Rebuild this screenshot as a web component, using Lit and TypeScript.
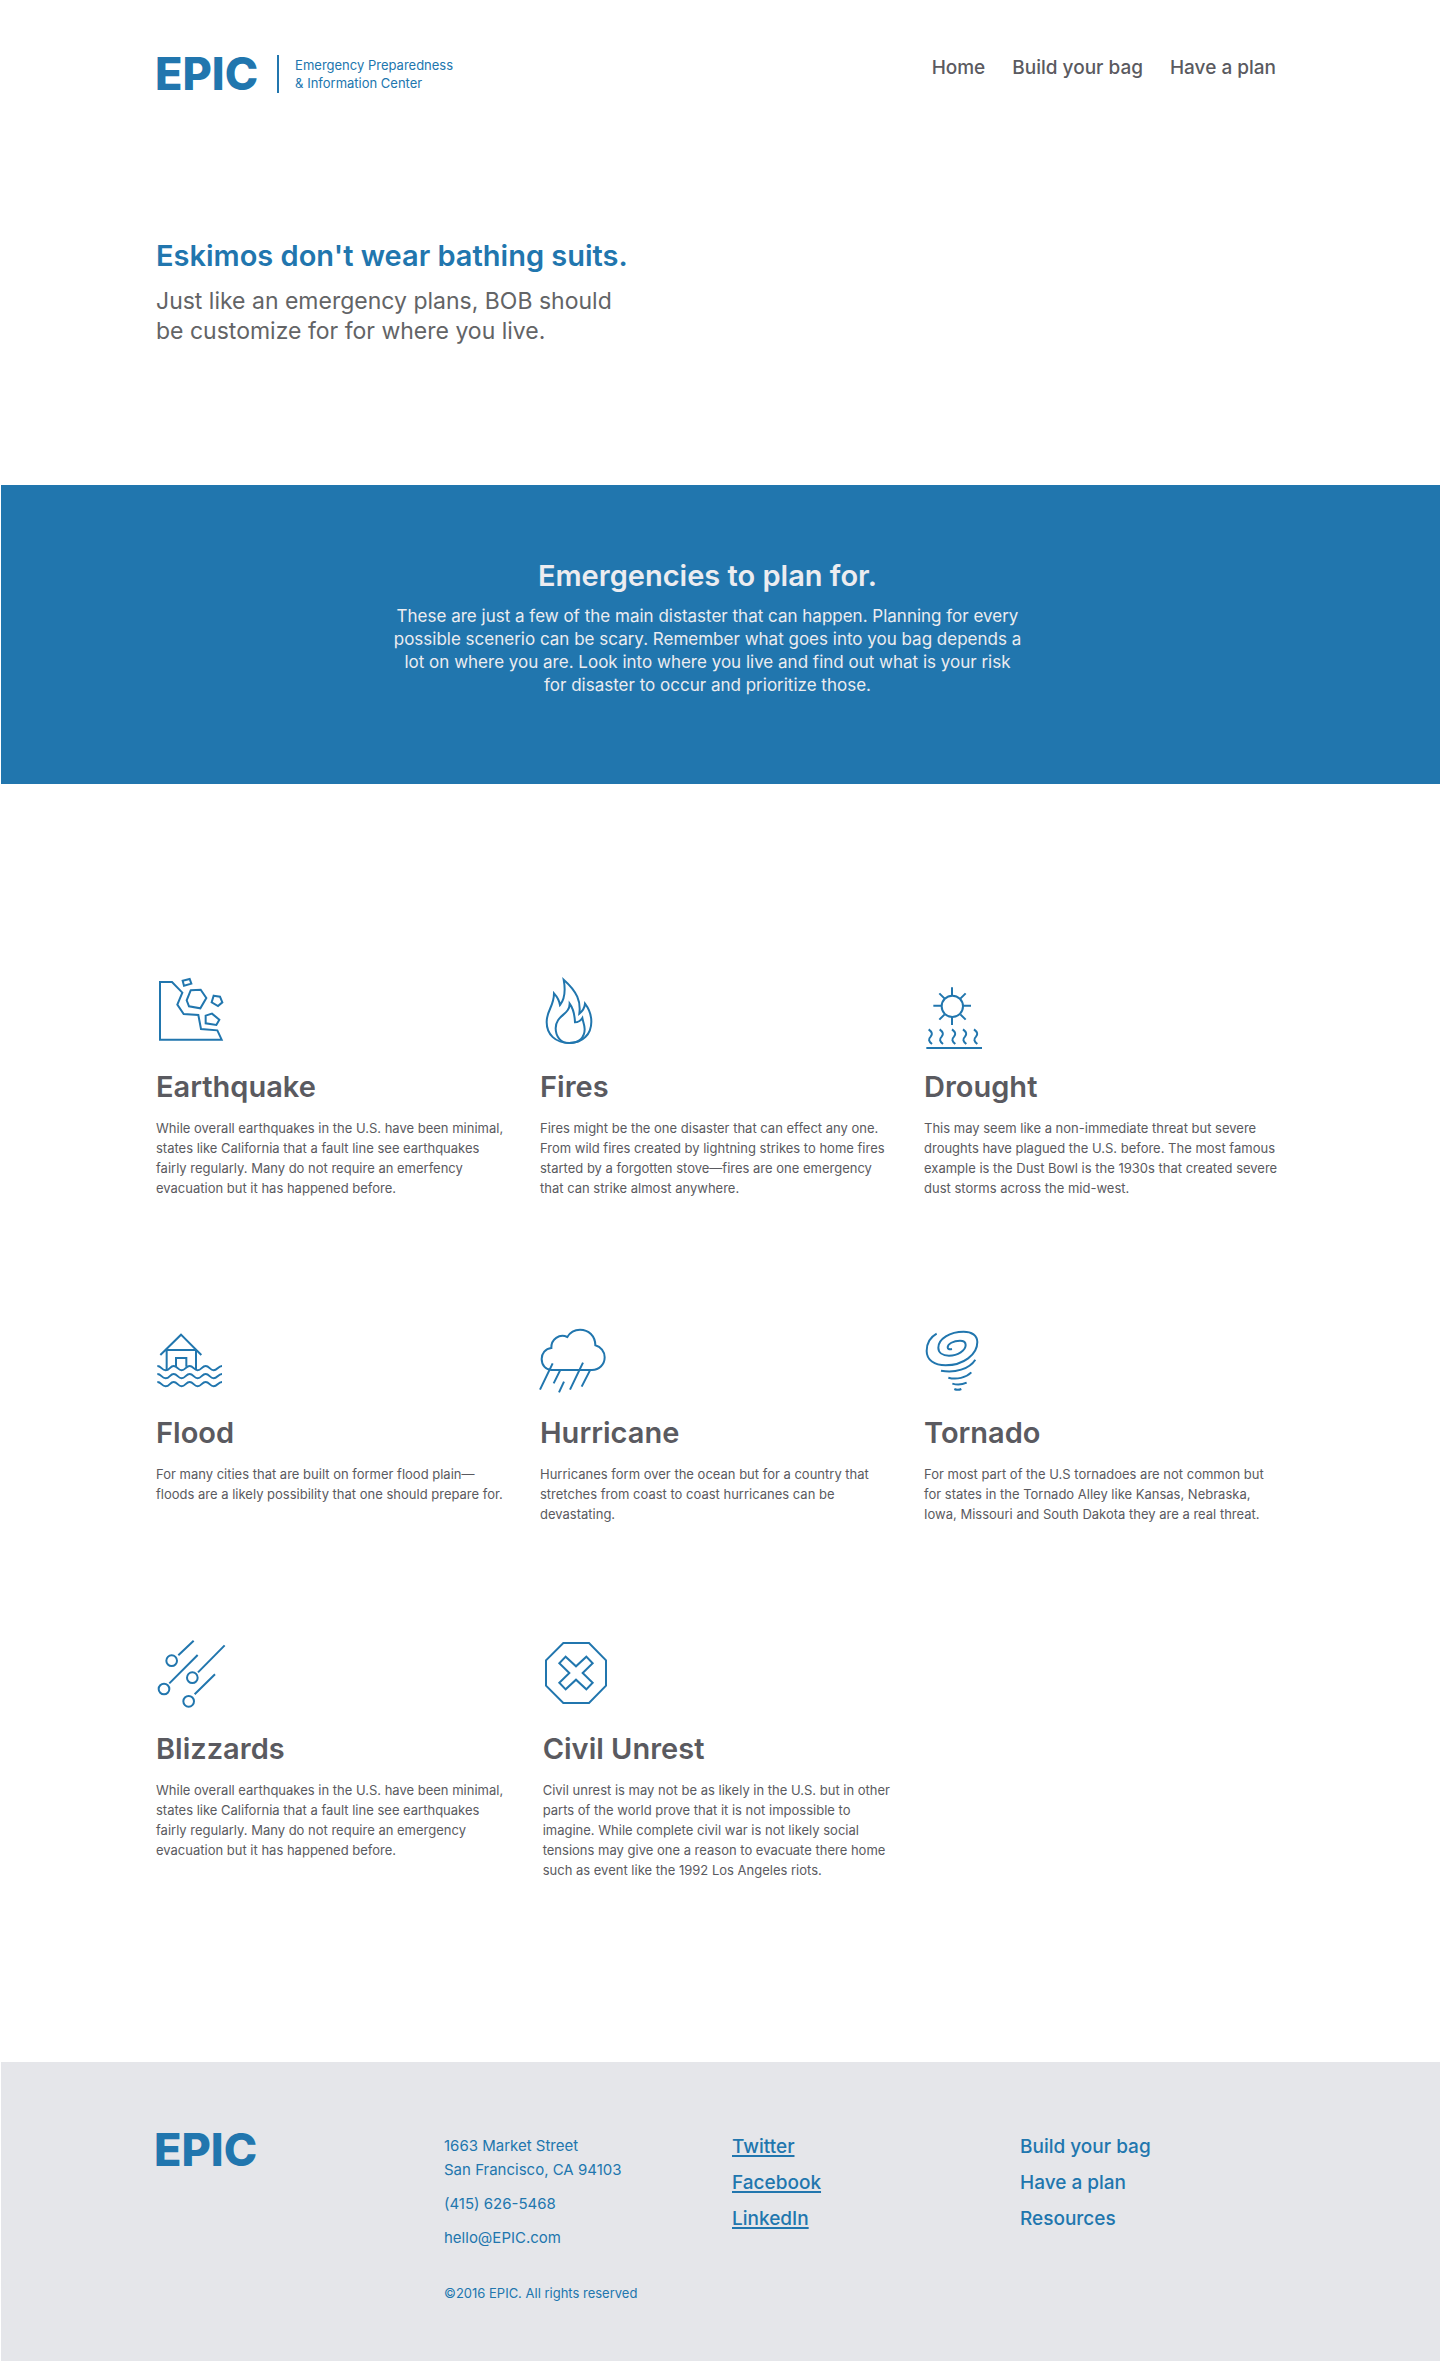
import { LitElement, html, svg, css, SVGTemplateResult } from "lit";
import { customElement, property } from "lit/decorators.js";

interface Topic {
  title: string;
  lines: string[];
  viewBox: string;
  icon: SVGTemplateResult;
}

const wave = (y: number) =>
  `M52 ${y} C64 ${y} 65 ${y + 13} 77 ${y + 13} S90 ${y} 101 ${y} S114 ${y + 13} 125 ${y + 13} S138 ${y} 149 ${y} S162 ${y + 13} 173 ${y + 13} S186 ${y} 197 ${y} S210 ${y + 13} 221 ${y + 13} S234 ${y} 246 ${y}`;

const rows: Topic[][] = [
  [
    {
      title: "Earthquake",
      lines: [
        "While overall earthquakes in the U.S. have been minimal,",
        "states like California that a fault line see earthquakes",
        "fairly regularly. Many do not require an emerfency",
        "evacuation but it has happened before.",
      ],
      viewBox: "48 48 240 216",
      icon: svg`
        <path d="M60 66H96L127 98L112 134L131 162L175 165L183 207L232 211L245 239H60Z" />
        <path d="M128 62L149 57L154 71L132 77Z" />
        <path d="M152 91L182 89L199 114L181 145L147 139L140 121Z" />
        <path d="M221 107L240 110L247 127L234 138L215 127Z" />
        <path d="M197 167L216 161L238 179L229 195L197 190Z" />`,
    },
    {
      title: "Fires",
      lines: [
        "Fires might be the one disaster that can effect any one.",
        "From wild fires created by lightning strikes to home fires",
        "started by a forgotten stove—fires are one emergency",
        "that can strike almost anywhere.",
      ],
      viewBox: "60 48 240 216",
      icon: svg`
        <path d="M131 59C172 95 183 125 178 161C188 153 194 143 195 131C208 148 214 165 214 185C214 223 188 249 148 249C106 249 80 223 80 186C80 150 102 140 102 100C113 112 118 122 120 135C134 118 137 92 131 59Z" />
        <path d="M149 131C149 165 107 165 107 205C107 230 122 249 148 249C178 249 194 232 194 208C194 194 189 186 187 174C181 183 174 187 165 187C164 163 160 146 149 131Z" />`,
    },
    {
      title: "Drought",
      lines: [
        "This may seem like a non-immediate threat but severe",
        "droughts have plagued the U.S. before. The most famous",
        "example is the Dust Bowl is the 1930s that created severe",
        "dust storms across the mid-west.",
      ],
      viewBox: "72 48 240 216",
      icon: svg`
        <circle cx="157" cy="139" r="32" />
        <path d="M156 82V107M156 171V195M100 137H124M189 137H213M118 100L134 116M197 100L181 116M118 179L134 163M197 179L181 163" />
        ${[86, 119, 156, 189, 222].map(
          (x) => svg`<path d="M${x} 208c11 8 12 15 6 22c-8 8 -6 14 4 22" />`,
        )}
        <path d="M79 264H246" />`,
    },
  ],
  [
    {
      title: "Flood",
      lines: [
        "For many cities that are built on former flood plain—",
        "floods are a likely possibility that one should prepare for.",
      ],
      viewBox: "48 36 240 216",
      icon: svg`
        <path d="M61 135L123 74L184 135M80 120H168M80 120V180M168 120V180M108 170V144H139V170" />
        <path d="${wave(168)}" />
        <path d="${wave(192)}" />
        <path d="${wave(216)}" />`,
    },
    {
      title: "Hurricane",
      lines: [
        "Hurricanes form over the ocean but for a country that",
        "stretches from coast to coast hurricanes can be",
        "devastating.",
      ],
      viewBox: "60 36 240 216",
      icon: svg`
        <path d="M95 180H216C238 180 254 163 254 142C254 124 242 110 226 106C226 78 206 59 180 59C163 59 150 67 142 81C118 70 93 88 94 114C76 116 65 130 65 147C65 166 78 180 95 180Z" />
        <path d="M98 160L60 239M120 182L101 220M132 215L117 247M189 158L150 239M210 181L185 230" />`,
    },
    {
      title: "Tornado",
      lines: [
        "For most part of the U.S tornadoes are not common but",
        "for states in the Tornado Alley like Kansas, Nebraska,",
        "Iowa, Missouri and South Dakota they are a real threat.",
      ],
      viewBox: "72 36 240 216",
      icon: svg`
        <path d="M110 71C90 82 80 102 80 123C80 150 103 166 137 166C190 166 232 134 232 96C232 76 215 65 191 65C150 65 115 86 115 113C115 128 128 137 147 137C174 137 197 121 197 105C197 96 190 92 180 92C160 92 143 102 143 112C143 117 147 119 156 117" />
        <path d="M123 182C165 190 208 177 226 149M145 203C170 210 198 203 214 187M157 221C170 225 187 224 200 218M163 237Q173 242 184 237" />`,
    },
  ],
  [
    {
      title: "Blizzards",
      lines: [
        "While overall earthquakes in the U.S. have been minimal,",
        "states like California that a fault line see earthquakes",
        "fairly regularly. Many do not require an emergency",
        "evacuation but it has happened before.",
      ],
      viewBox: "48 54 240 216",
      icon: svg`
        <circle cx="95" cy="122" r="16" />
        <circle cx="157" cy="173" r="16" />
        <circle cx="72" cy="207" r="16" />
        <circle cx="146" cy="244" r="16" />
        <path d="M115 106L161 62M174 157L254 76M88 190L173 105M164 223L225 163" />`,
    },
    {
      title: "Civil Unrest",
      lines: [
        "Civil unrest is may not be as likely in the U.S. but in other",
        "parts of the world prove that it is not impossible to",
        "imagine. While complete civil war is not likely social",
        "tensions may give one a reason to evacuate there home",
        "such as event like the 1992 Los Angeles riots.",
      ],
      viewBox: "1209 54 240 216",
      icon: svg`
        <path d="M1270 69H1347L1398 121V197L1347 249H1270L1218 197V121Z" />
        <path d="M1277 110L1308 139L1339 110L1358 130L1328 159L1358 188L1339 208L1308 179L1277 208L1258 188L1288 159L1258 130Z" />`,
    },
  ],
];

const withBreaks = (lines: string[]) =>
  lines.map((line, i) => (i ? html`<br />${line}` : line));

@customElement("topic-card")
export class TopicCard extends LitElement {
  @property({ attribute: false }) topic!: Topic;

  static styles = css`
    :host {
      display: block;
    }
    .icon {
      display: block;
      width: 80px;
      height: 72px;
      overflow: visible;
      fill: none;
      stroke: #2176ae;
      stroke-width: 6;
    }
    .title {
      margin: 21px 0 13px;
      font-size: 29px;
      line-height: 36px;
      font-weight: 600;
    }
    .text {
      margin: 0;
      font-size: 13px;
      line-height: 20px;
      white-space: nowrap;
    }
  `;

  render() {
    const { title, lines, viewBox, icon } = this.topic;
    return html`
      <svg class="icon" viewBox=${viewBox} aria-hidden="true">${icon}</svg>
      <h3 class="title">${title}</h3>
      <p class="text">${withBreaks(lines)}</p>
    `;
  }
}

@customElement("app-root")
export class AppRoot extends LitElement {
  static styles = css`
    :host {
      display: block;
      background: #fff;
      color: #5a5a60;
      font-family: Inter, "Liberation Sans", sans-serif;
    }
    a {
      color: inherit;
      text-decoration: none;
    }
    h1,
    h2,
    p {
      margin: 0;
    }
    .header {
      display: flex;
      align-items: flex-start;
      justify-content: space-between;
      padding: 52px 164px 0 157px;
    }
    .brand {
      display: flex;
      align-items: center;
      gap: 19px;
      color: #2176ae;
    }
    .logo {
      margin-left: -2px;
      font-size: 45px;
      line-height: 44px;
      font-weight: 800;
      color: #2176ae;
    }
    .tagline {
      padding: 1px 0 1px 16px;
      border-left: 2px solid #2176ae;
      font-size: 13px;
      line-height: 18px;
    }
    .nav {
      display: flex;
      gap: 27px;
      padding-top: 4px;
    }
    .link {
      font-size: 19px;
      line-height: 24px;
      font-weight: 500;
    }
    .hero {
      padding: 142px 156px 139px;
    }
    .heading {
      font-size: 29px;
      line-height: 36px;
      font-weight: 600;
    }
    .hero .heading {
      color: #2176ae;
    }
    .lead {
      margin-top: 12px;
      font-size: 23px;
      line-height: 30px;
      color: #636466;
    }
    .band {
      margin-left: 1px;
      padding: 73px 26px 87px 0;
      background: #2176ae;
      color: #ececf0;
      text-align: center;
    }
    .intro {
      margin-top: 11px;
      font-size: 17px;
      line-height: 23px;
    }
    .topics {
      padding: 192px 132px 182px 156px;
    }
    .row {
      display: grid;
      grid-template-columns: repeat(3, 1fr);
    }
    .row + .row {
      margin-top: 124px;
    }
    .row + .row:last-child {
      column-gap: 8px;
      margin-top: 114px;
    }
    .footer {
      display: grid;
      grid-template-columns: repeat(4, 1fr);
      margin-left: 1px;
      padding: 66px 132px 58px 155px;
      background: #e5e6ea;
      color: #2176ae;
    }
    .contact {
      display: flex;
      flex-direction: column;
      align-items: flex-start;
      gap: 10px;
      padding-top: 6px;
      font-size: 15px;
      line-height: 24px;
      font-style: normal;
    }
    .copyright {
      margin-top: 23px;
      font-size: 13px;
      line-height: 20px;
    }
    .links {
      display: flex;
      flex-direction: column;
      align-items: flex-start;
      gap: 12px;
      padding-top: 7px;
    }
    .social .link {
      text-decoration: underline;
      text-decoration-thickness: 2px;
      text-underline-offset: 2px;
    }
  `;

  render() {
    return html`
      <header class="header">
        <div class="brand">
          <a class="logo" href="#">EPIC</a>
          <p class="tagline">Emergency Preparedness<br />&amp; Information Center</p>
        </div>
        <nav class="nav" aria-label="Main">
          <a class="link" href="#home">Home</a>
          <a class="link" href="#bag">Build your bag</a>
          <a class="link" href="#plan">Have a plan</a>
        </nav>
      </header>
      <main>
        <section class="hero">
          <h1 class="heading">Eskimos don't wear bathing suits.</h1>
          <p class="lead">
            Just like an emergency plans, BOB should<br />be customize for for
            where you live.
          </p>
        </section>
        <section class="band">
          <h2 class="heading">Emergencies to plan for.</h2>
          <p class="intro">
            ${withBreaks([
              "These are just a few of the main distaster that can happen. Planning for every",
              "possible scenerio can be scary. Remember what goes into you bag depends a",
              "lot on where you are. Look into where you live and find out what is your risk",
              "for disaster to occur and prioritize those.",
            ])}
          </p>
        </section>
        <section class="topics">
          ${rows.map(
            (row) => html`<div class="row">
              ${row.map((topic) => html`<topic-card .topic=${topic}></topic-card>`)}
            </div>`,
          )}
        </section>
      </main>
      <footer class="footer">
        <div><a class="logo" href="#">EPIC</a></div>
        <address class="contact">
          <span>1663 Market Street<br />San Francisco, CA 94103</span>
          <a href="tel:+14156265468">(415) 626-5468</a>
          <a href="mailto:hello@EPIC.com">hello@EPIC.com</a>
          <span class="copyright">©2016 EPIC. All rights reserved</span>
        </address>
        <nav class="links social" aria-label="Social">
          <a class="link" href="#twitter">Twitter</a>
          <a class="link" href="#facebook">Facebook</a>
          <a class="link" href="#linkedin">LinkedIn</a>
        </nav>
        <nav class="links" aria-label="Footer">
          <a class="link" href="#bag">Build your bag</a>
          <a class="link" href="#plan">Have a plan</a>
          <a class="link" href="#resources">Resources</a>
        </nav>
      </footer>
    `;
  }
}
